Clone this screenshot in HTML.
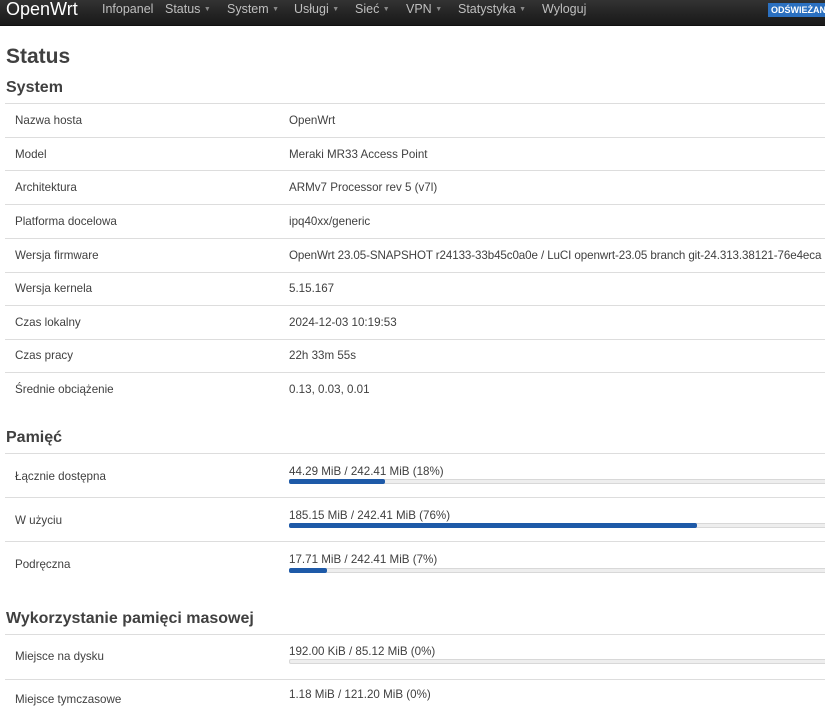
<!DOCTYPE html>
<html><head><meta charset="utf-8"><style>
*{margin:0;padding:0;box-sizing:border-box}
body{width:825px;height:700px;overflow:hidden;background:#fff;font-family:"Liberation Sans",Arial,sans-serif;color:#404040;position:relative}
.nav{position:absolute;left:0;top:0;width:825px;height:26px;background:linear-gradient(#333,#222 60%,#1a1a1a);border-bottom:1px solid #111}
.nav span{position:absolute;top:2px;font-size:12.5px;color:#bfbfbf;white-space:nowrap}
.nav .brand{left:6px;top:-1px;font-size:18px;color:#fff}
.nav span.caret{position:static;font-size:7px;vertical-align:2px;color:#888}
.btn{position:absolute;left:768px;top:3px;height:14px;background:#2b70c0;color:#fff;font-size:9px;font-weight:bold;padding:1px 3px;width:60px;line-height:12px;overflow:hidden;white-space:nowrap}
h1{position:absolute;left:6px;top:45px;font-size:21px;color:#404040}
h2{position:absolute;left:6px;font-size:16px;color:#404040}
.ln{position:absolute;left:5px;width:820px;height:1px;background:#ddd}
.l{position:absolute;left:15px;font-size:11.6px;color:#404040;white-space:nowrap}
.v{position:absolute;left:289px;font-size:11.6px;color:#404040;white-space:nowrap}
.tr{position:absolute;left:289px;width:540px;height:5px;background:#eee;border:1px solid #d8d8d8;border-radius:2px}
.fl{position:absolute;left:289px;height:5px;background:#1e5aa8;border-radius:2px}
</style></head><body>
<div class="nav">
<span class="brand">OpenWrt</span>
<span style="left:102px">Infopanel</span>
<span style="left:165px">Status <span class="caret">▼</span></span>
<span style="left:227px">System <span class="caret">▼</span></span>
<span style="left:294px">Usługi <span class="caret">▼</span></span>
<span style="left:355px">Sieć <span class="caret">▼</span></span>
<span style="left:406px">VPN <span class="caret">▼</span></span>
<span style="left:458px">Statystyka <span class="caret">▼</span></span>
<span style="left:542px">Wyloguj</span>
</div>
<div class="btn">ODŚWIEŻANIE</div>
<h1>Status</h1>
<h2 style="top:79px">System</h2>
<div class="ln" style="top:103px"></div>
<div class="l" style="top:114px">Nazwa hosta</div><div class="v" style="top:114px">OpenWrt</div>
<div class="ln" style="top:137px"></div>
<div class="l" style="top:148px">Model</div><div class="v" style="top:148px">Meraki MR33 Access Point</div>
<div class="ln" style="top:170px"></div>
<div class="l" style="top:181px">Architektura</div><div class="v" style="top:181px">ARMv7 Processor rev 5 (v7l)</div>
<div class="ln" style="top:204px"></div>
<div class="l" style="top:215px">Platforma docelowa</div><div class="v" style="top:215px">ipq40xx/generic</div>
<div class="ln" style="top:238px"></div>
<div class="l" style="top:249px">Wersja firmware</div><div class="v" style="top:249px;letter-spacing:-0.1px">OpenWrt 23.05-SNAPSHOT r24133-33b45c0a0e / LuCI openwrt-23.05 branch git-24.313.38121-76e4eca</div>
<div class="ln" style="top:272px"></div>
<div class="l" style="top:282px">Wersja kernela</div><div class="v" style="top:282px">5.15.167</div>
<div class="ln" style="top:305px"></div>
<div class="l" style="top:316px">Czas lokalny</div><div class="v" style="top:316px">2024-12-03 10:19:53</div>
<div class="ln" style="top:339px"></div>
<div class="l" style="top:349px">Czas pracy</div><div class="v" style="top:349px">22h 33m 55s</div>
<div class="ln" style="top:372px"></div>
<div class="l" style="top:383px">Średnie obciążenie</div><div class="v" style="top:383px">0.13, 0.03, 0.01</div>

<h2 style="top:429px">Pamięć</h2>
<div class="ln" style="top:453px"></div>
<div class="l" style="top:470px">Łącznie dostępna</div><div class="v" style="top:465px">44.29 MiB / 242.41 MiB (18%)</div>
<div class="tr" style="top:479px"></div><div class="fl" style="top:479px;width:96px"></div>
<div class="ln" style="top:497px"></div>
<div class="l" style="top:514px">W użyciu</div><div class="v" style="top:509px">185.15 MiB / 242.41 MiB (76%)</div>
<div class="tr" style="top:523px"></div><div class="fl" style="top:523px;width:408px"></div>
<div class="ln" style="top:541px"></div>
<div class="l" style="top:558px">Podręczna</div><div class="v" style="top:553px">17.71 MiB / 242.41 MiB (7%)</div>
<div class="tr" style="top:568px"></div><div class="fl" style="top:568px;width:38px"></div>

<h2 style="top:610px">Wykorzystanie pamięci masowej</h2>
<div class="ln" style="top:634px"></div>
<div class="l" style="top:650px">Miejsce na dysku</div><div class="v" style="top:645px">192.00 KiB / 85.12 MiB (0%)</div>
<div class="tr" style="top:659px"></div>
<div class="ln" style="top:679px"></div>
<div class="l" style="top:693px">Miejsce tymczasowe</div><div class="v" style="top:688px">1.18 MiB / 121.20 MiB (0%)</div>
</body></html>
